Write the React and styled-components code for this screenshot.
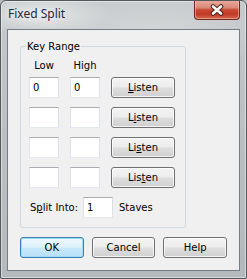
import React from "react";
import styled, { createGlobalStyle } from "styled-components";

const GlobalStyle = createGlobalStyle`
    html, body {
        margin: 0;
        padding: 0;
        background: #b9bdc0;
    }
    * {
        box-sizing: border-box;
    }
`;

const uiFont = `"DejaVu Sans", "Liberation Sans", sans-serif`;

const Window = styled.div`
    position: relative;
    width: 247px;
    height: 279px;
    display: flex;
    flex-direction: column;
    border: 1px solid #53585d;
    border-radius: 6px 6px 2px 2px;
    background:
        radial-gradient(ellipse 70px 22px at 40px 14px, rgba(236, 238, 238, 0.85), rgba(236, 238, 238, 0) 100%),
        radial-gradient(ellipse 120px 40px at 150px 30px, rgba(222, 224, 225, 0.6), rgba(222, 224, 225, 0) 100%),
        linear-gradient(180deg, #c6c9cb 0%, #bcc0c3 45%, #b4b9bc 100%);
    box-shadow: inset 0 0 0 1px rgba(255, 255, 255, 0.45);
    font-family: ${uiFont};
    font-size: 10px;
    color: #000;
    overflow: hidden;
`;

const TitleBar = styled.div`
    height: 28px;
    display: flex;
    align-items: flex-start;
    justify-content: space-between;
    padding-left: 7px;
    padding-right: 6px;
`;

const Title = styled.span`
    font-family: "Noto Sans", "Open Sans", sans-serif;
    font-size: 12px;
    line-height: 16px;
    margin-top: 5px;
    color: #1c2a3e;
    text-shadow: 0 0 6px rgba(255, 255, 255, 0.9);
`;

const CloseButton = styled.div`
    width: 46px;
    height: 20px;
    margin-top: -1px;
    display: flex;
    align-items: center;
    justify-content: center;
    border: 1px solid #6e2a22;
    border-top: none;
    border-radius: 0 0 4px 4px;
    background: linear-gradient(
        180deg,
        #e9ab9d 0%,
        #dc8a78 40%,
        #c84732 52%,
        #c13a27 75%,
        #d7684f 100%
    );
    box-shadow: inset 0 0 0 1px rgba(255, 220, 210, 0.45);
`;

const Client = styled.div`
    flex: 1;
    margin: 0 6px 7px 6px;
    border: 1px solid #767d84;
    background: #f0f0f0;
    padding: 10px 12px 12px 12px;
    display: flex;
    flex-direction: column;
    gap: 9px;
`;

const Group = styled.fieldset`
    margin: 0;
    width: 166px;
    border: 1px solid #d0d9df;
    border-radius: 3px;
    padding: 6px 8px 9px 8px;
    display: flex;
    flex-direction: column;
    gap: 9px;
`;

const Legend = styled.legend`
    padding: 0 1px;
    margin-left: -3px;
    line-height: 13px;
`;

const KeyGrid = styled.div`
    display: grid;
    grid-template-columns: 30px 30px 64px;
    column-gap: 11px;
    row-gap: 9px;
    align-items: center;
`;

const ColLabel = styled.span`
    justify-self: center;
    line-height: 13px;
    margin-bottom: -4px;
`;

const TextBox = styled.div`
    width: 30px;
    height: 21px;
    border: 1px solid;
    border-color: #abadb3 #dbdfe6 #e3e9ef #e2e3ea;
    background: #fff;
    padding-left: 3px;
    display: flex;
    align-items: center;
`;

const Button = styled.div`
    width: ${(props) => props.width || 64}px;
    height: 21px;
    display: flex;
    align-items: center;
    justify-content: center;
    border: 1px solid ${(props) => (props.primary ? "#3c7fb1" : "#707070")};
    border-radius: 3px;
    background: ${(props) =>
        props.primary
            ? "linear-gradient(180deg, #eef8fd 0%, #dff2fc 48%, #c8e9fb 52%, #b6e0f7 100%)"
            : "linear-gradient(180deg, #f4f4f4 0%, #ececec 48%, #dedede 52%, #d0d0d0 100%)"};
    box-shadow: inset 0 0 0 1px
        ${(props) => (props.primary ? "#9ddaf8" : "rgba(255, 255, 255, 0.75)")};
    line-height: 13px;

    u {
        text-decoration-thickness: 1px;
        text-underline-offset: 1px;
    }
`;

const SplitRow = styled.div`
    display: flex;
    align-items: center;
`;

const SplitLabel = styled.span`
    width: 54px;
    padding-left: 1px;
`;

const Staves = styled.span`
    margin-left: 6px;
`;

const ButtonRow = styled.div`
    display: flex;
    gap: 8px;
`;

// the access key moves one letter along on each row
const ListenLabel = ({ index }) => {
    const word = "Listen";
    return (
        <span>
            {word.slice(0, index)}
            <u>{word[index]}</u>
            {word.slice(index + 1)}
        </span>
    );
};

const rows = [
    { low: "0", high: "0" },
    { low: "", high: "" },
    { low: "", high: "" },
    { low: "", high: "" },
];

const CloseIcon = () => (
    <svg width="14" height="12" viewBox="0 0 14 12">
        <path
            d="M3 2.5 L11 9.5 M11 2.5 L3 9.5"
            stroke="#4a2420"
            strokeWidth="4.6"
            strokeLinecap="round"
            fill="none"
        />
        <path
            d="M3 2.5 L11 9.5 M11 2.5 L3 9.5"
            stroke="#ffffff"
            strokeWidth="2.6"
            strokeLinecap="round"
            fill="none"
        />
    </svg>
);

const App = () => {
    return (
        <>
            <GlobalStyle />
            <Window>
                <TitleBar>
                    <Title>Fixed Split</Title>
                    <CloseButton>
                        <CloseIcon />
                    </CloseButton>
                </TitleBar>
                <Client>
                    <Group>
                        <Legend>Key Range</Legend>
                        <KeyGrid>
                            <ColLabel>Low</ColLabel>
                            <ColLabel>High</ColLabel>
                            <span />
                            {rows.map((row, i) => (
                                <React.Fragment key={i}>
                                    <TextBox>{row.low}</TextBox>
                                    <TextBox>{row.high}</TextBox>
                                    <Button>
                                        <ListenLabel index={i} />
                                    </Button>
                                </React.Fragment>
                            ))}
                        </KeyGrid>
                        <SplitRow>
                            <SplitLabel>
                                S<u>p</u>lit Into:
                            </SplitLabel>
                            <TextBox>1</TextBox>
                            <Staves>Staves</Staves>
                        </SplitRow>
                    </Group>
                    <ButtonRow>
                        <Button primary>OK</Button>
                        <Button>Cancel</Button>
                        <Button>Help</Button>
                    </ButtonRow>
                </Client>
            </Window>
        </>
    );
};

export default App;
